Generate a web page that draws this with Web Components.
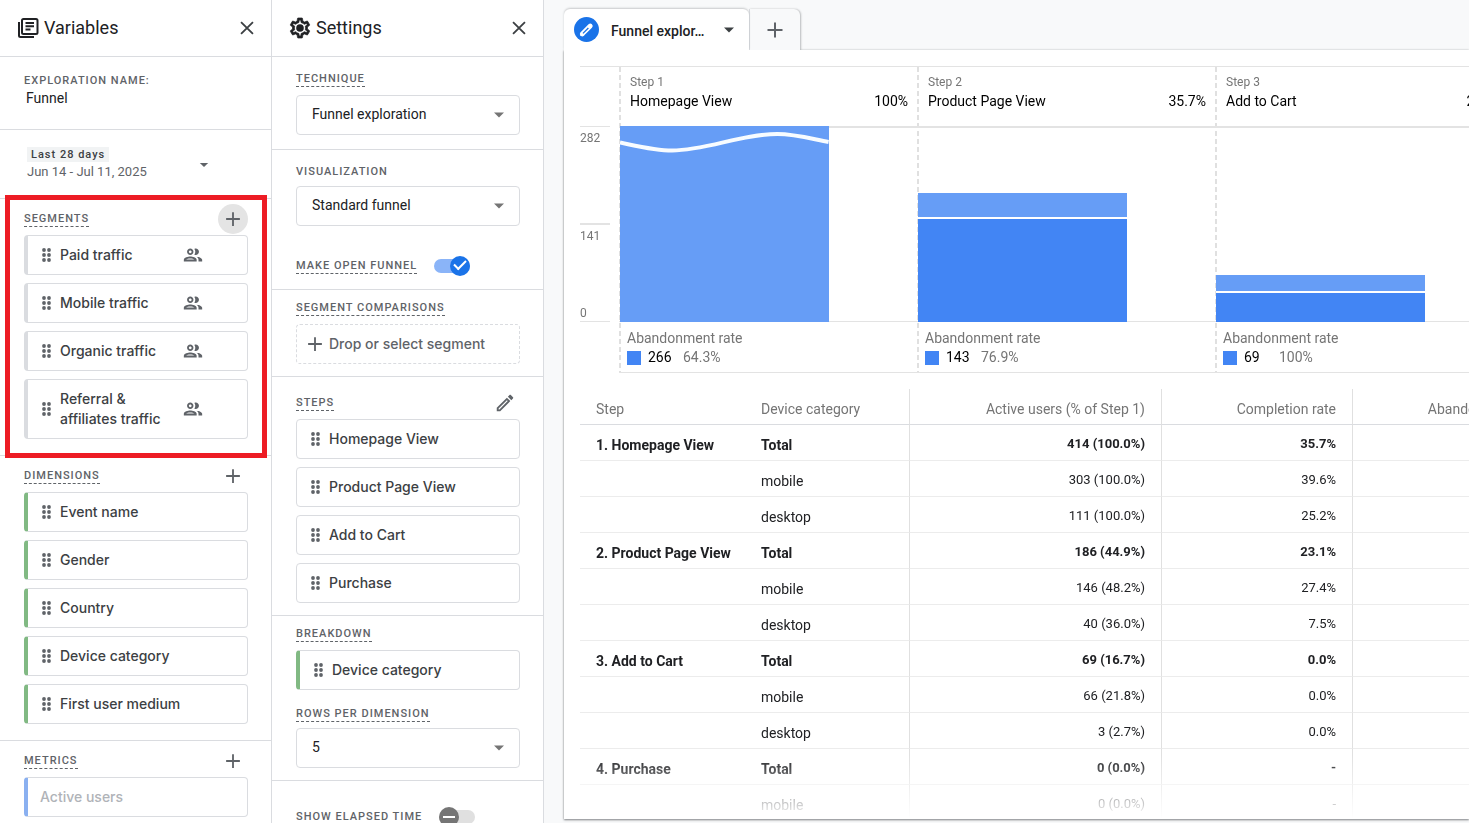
<!DOCTYPE html>
<html lang="en">
<head>
<meta charset="utf-8">
<meta name="viewport" content="width=device-width, initial-scale=1">
<title>Funnel exploration</title>
<style>
  :root {
    --line: #dadce0;
    --ink: #202124;
    --chip-ink: #3c4043;
    --muted: #5f6368;
    --grey: #757575;
    --blue: #1a73e8;
    --green: #81b983;
    --display: "Google Sans", Inter, "Open Sans", sans-serif;
  }
  body { margin: 0; font-family: Roboto, "Liberation Sans", sans-serif; font-size: 14px; color: var(--ink); background: #f8f9fa; }
</style>
</head>
<body>
<exploration-app></exploration-app>

<script>
const define = (name, html, init) => {
  const template = document.createElement('template');
  template.innerHTML = html;
  customElements.define(name, class extends HTMLElement {
    connectedCallback() {
      if (this.shadowRoot) return;
      const content = template.content.cloneNode(true);
      if (init) init(this, content);
      this.attachShadow({ mode: 'open' }).append(content);
    }
  });
};

const ICONS = {
  close: '<path d="M5.5 5.5l13 13M18.5 5.5l-13 13" fill="none" stroke="currentColor" stroke-width="2"/>',
  plus: '<path d="M12 4.500v15M4.500 12h15" fill="none" stroke="currentColor" stroke-width="2"/>',
  arrow: '<path d="M7 9.500h10l-5 5z"/>',
  library: '<path d="M7.500 3h12.500a1.500 1.500 0 0 1 1.500 1.500v12a1.500 1.500 0 0 1-1.500 1.500h-12.500a1.500 1.500 0 0 1-1.500-1.500v-12a1.500 1.500 0 0 1 1.500-1.500zM3 6v13.500a1.500 1.500 0 0 0 1.500 1.500H18M9.500 7h8.500M9.500 10.300h8.500M9.500 13.600h5" fill="none" stroke="currentColor" stroke-width="2"/>',
  people: '<path d="M9 13.750c-2.340 0-7 1.170-7 3.500V19h14v-1.750c0-2.330-4.660-3.500-7-3.500zM4.340 17c.84-.58 2.870-1.250 4.660-1.250s3.820.67 4.660 1.250H4.340zM9 12c1.930 0 3.500-1.570 3.500-3.500S10.930 5 9 5 5.500 6.570 5.500 8.500 7.070 12 9 12zm0-5c.83 0 1.500.67 1.500 1.500S9.830 10 9 10s-1.500-.67-1.500-1.500S8.170 7 9 7zm7.040 6.810c1.160.84 1.960 1.960 1.960 3.440V19h4v-1.750c0-2.020-3.500-3.170-5.960-3.440zM15 12c1.930 0 3.500-1.570 3.500-3.500S16.930 5 15 5c-.54 0-1.040.13-1.500.35.63.89 1 1.980 1 3.150s-.37 2.260-1 3.150c.46.22.96.35 1.500.35z"/>',
  edit: '<path d="M14.060 9.020l.92.92L5.920 19H5v-.92l9.060-9.060M17.660 3c-.25 0-.51.1-.7.29l-1.830 1.830 3.750 3.750 1.830-1.830c.39-.39.39-1.020 0-1.410l-2.340-2.340c-.2-.2-.45-.29-.71-.29zm-3.600 3.190L3 17.250V21h3.750L17.810 9.940l-3.750-3.750z"/>',
  badge: '<circle cx="12" cy="12" r="12" fill="#1a73e8"/><path d="M8 16.200l7.600-7.600" fill="none" stroke="#fff" stroke-width="4.600" stroke-linecap="round"/><path d="M6 18.300l.6-4 3.400 3.400z" fill="#fff"/><path d="M8.600 15.700l5.200-5.200" fill="none" stroke="#1a73e8" stroke-width="1.300"/>',
  gear: '<path d="M19.430 12.980c.04-.32.07-.64.07-.98 0-.34-.03-.66-.07-.98l2.110-1.650c.19-.15.24-.42.12-.64l-2-3.460c-.09-.16-.26-.25-.44-.25-.06 0-.12.01-.17.03l-2.490 1c-.52-.4-1.080-.73-1.690-.98l-.38-2.650C14.460 2.180 14.250 2 14 2h-4c-.25 0-.46.18-.49.42l-.38 2.650c-.61.25-1.170.59-1.690.98l-2.490-1c-.06-.02-.12-.03-.18-.03-.17 0-.34.09-.43.25l-2 3.460c-.13.22-.07.49.12.64l2.110 1.650c-.04.32-.07.65-.07.98 0 .33.03.66.07.98l-2.110 1.650c-.19.15-.24.42-.12.64l2 3.460c.09.16.26.25.44.25.06 0 .12-.01.17-.03l2.490-1c.52.4 1.080.73 1.690.98l.38 2.650c.03.24.24.42.49.42h4c.25 0 .46-.18.49-.42l.38-2.650c.61-.25 1.170-.59 1.690-.98l2.490 1c.06.02.12.03.18.03.17 0 .34-.09.43-.25l2-3.460c.12-.22.07-.49-.12-.64l-2.110-1.650zm-1.980-1.710c.04.31.05.52.05.73 0 .21-.02.43-.05.73l-.14 1.130.89.7 1.080.84-.7 1.210-1.270-.51-1.040-.42-.9.68c-.43.32-.84.56-1.250.73l-1.060.43-.16 1.130-.2 1.350h-1.400l-.19-1.350-.16-1.130-1.060-.43c-.43-.18-.83-.41-1.230-.71l-.91-.7-1.060.43-1.270.51-.7-1.210 1.080-.84.89-.7-.14-1.130c-.03-.31-.05-.54-.05-.74s.02-.43.05-.73l.14-1.130-.89-.7-1.080-.84.7-1.210 1.270.51 1.040.42.9-.68c.43-.32.84-.56 1.250-.73l1.060-.43.16-1.130.2-1.350h1.390l.19 1.350.16 1.130 1.060.43c.43.18.83.41 1.230.71l.91.7 1.060-.43 1.270-.51.7 1.210-1.070.85-.89.7.14 1.130z" stroke="currentColor" stroke-width=".7"/><circle cx="12" cy="12" r="3.800"/>'
};

define('ui-icon', `
<style>
  :host { display: block; flex: none; width: 24px; height: 24px; }
  svg { display: block; width: 100%; height: 100%; fill: currentColor; }
</style>
<svg viewBox="0 0 24 24" aria-hidden="true"></svg>`, (el, root) => {
  root.querySelector('svg').innerHTML = ICONS[el.getAttribute('name')];
});

define('icon-button', `
<style>
  :host { display: block; flex: none; }
  button { display: grid; place-items: center; width: 30px; height: 30px; padding: 0; border: 0; border-radius: 50%; background: none; color: var(--muted); cursor: pointer; }
  :host([active]) button { background: #e4e4e4; }
  :host([dark]) button { color: var(--chip-ink); }
  ui-icon { width: 22px; height: 22px; }
</style>
<button type="button"><ui-icon></ui-icon></button>`, (el, root) => {
  root.querySelector('ui-icon').setAttribute('name', el.getAttribute('icon'));
  root.querySelector('button').setAttribute('aria-label', el.getAttribute('label'));
});

define('side-panel', `
<style>
  :host { display: flex; flex-direction: column; box-sizing: border-box; height: 100%; overflow: hidden; background: #fff; border-right: 1px solid var(--line); }
  header { display: flex; align-items: center; flex: none; height: 56px; padding: 0 9px 0 16px; gap: 4px; border-bottom: 1px solid var(--line); }
  h2 { flex: 1; margin: 0; font: 400 18px/24px Roboto, sans-serif; }
  .body { flex: 1; min-height: 0; overflow-y: auto; scrollbar-width: none; }
</style>
<header><ui-icon></ui-icon><h2></h2><icon-button dark icon="close" label="Close panel"></icon-button></header>
<div class="body"><slot></slot></div>`, (el, root) => {
  root.querySelector('ui-icon').setAttribute('name', el.getAttribute('icon'));
  root.querySelector('h2').textContent = el.getAttribute('heading');
});

define('panel-section', `
<style>
  :host { display: block; padding: 10px 24px 12px; border-bottom: 1px solid var(--line); }
</style>
<slot></slot>`);

define('variable-list', `
<style>
  :host { display: block; position: relative; padding: 5px 23px 16px 24px; border-bottom: 1px solid var(--line); }
  :host([spaced]) { padding-top: 11px; padding-bottom: 12px; }
  :host([highlighted])::after { content: ""; position: absolute; inset: -4px 4px -3px 5px; border: 5px solid #ed1c24; pointer-events: none; }
  header { display: flex; align-items: center; justify-content: space-between; height: 30px; margin-bottom: 1px; }
  h3 { margin: 0; font: 500 11px/15px Roboto, sans-serif; letter-spacing: 1px; text-transform: uppercase; color: var(--muted); border-bottom: 1px dashed var(--muted); }
  .items { display: grid; gap: 8px; }
</style>
<header><h3></h3><icon-button></icon-button></header>
<div class="items"><slot></slot></div>`, (el, root) => {
  const heading = el.getAttribute('heading');
  const icon = el.getAttribute('action') || 'plus';
  const button = root.querySelector('icon-button');
  root.querySelector('h3').textContent = heading;
  button.setAttribute('icon', icon);
  button.setAttribute('label', `${icon === 'edit' ? 'Edit' : 'Add'} ${heading}`);
  button.toggleAttribute('active', el.hasAttribute('highlighted'));
});

define('field-heading', `
<style>
  :host { display: block; }
  h3 { width: fit-content; margin: 0 0 8px; font: 500 11px/15px Roboto, sans-serif; letter-spacing: 1px; text-transform: uppercase; color: var(--muted); border-bottom: 1px dashed var(--muted); }
</style>
<h3><slot></slot></h3>`);

define('item-chip', `
<style>
  :host { display: flex; align-items: center; box-sizing: border-box; min-height: 40px; padding: 0 14px; border: 1px solid var(--line); border-radius: 4px; background: #fff; color: var(--chip-ink); font: 500 14px/20px var(--display); }
  :host([kind]) { border-left-width: 4px; }
  :host([kind="dimension"]) { border-left-color: var(--green); }
  :host([kind="metric"]) { border-left-color: #8ab0f0; }
  :host([placeholder]) { color: #b0b3b8; padding-left: 12px; }
  :host([placeholder]) .drag { display: none; }
  :host([tall]) { min-height: 60px; }
  .drag { width: 18px; height: 20px; color: var(--muted); }
  .text { flex: 1; max-width: 112px; }
  :host(:not([audience])) .text { max-width: none; }
  .people { display: none; width: 22px; height: 22px; margin-left: 10px; color: var(--muted); }
  :host([audience]) .people { display: block; }
  .drag svg { display: block; fill: currentColor; }
</style>
<span class="drag"><svg width="9" height="20" viewBox="0 0 9 20" aria-hidden="true"><circle cx="2" cy="5" r="1.900"/><circle cx="7" cy="5" r="1.900"/><circle cx="2" cy="10" r="1.900"/><circle cx="7" cy="10" r="1.900"/><circle cx="2" cy="15" r="1.900"/><circle cx="7" cy="15" r="1.900"/></svg></span>
<span class="text"><slot></slot></span>
<ui-icon class="people" name="people"></ui-icon>`);

define('text-field', `
<style>
  :host { display: block; padding: 16px 24px 21px; border-bottom: 1px solid var(--line); }
  label { display: block; font: 500 11px/15px Roboto, sans-serif; letter-spacing: 1px; text-transform: uppercase; color: var(--muted); }
  input { display: block; box-sizing: border-box; width: 100%; height: 20px; padding: 0 2px; border: 0; outline: 0; background: none; font: 400 14px/20px Roboto, sans-serif; color: var(--ink); }
</style>
<label for="field"></label><input id="field" type="text">`, (el, root) => {
  root.querySelector('label').textContent = el.getAttribute('label');
  root.querySelector('input').value = el.getAttribute('value');
});

define('date-range', `
<style>
  :host { display: block; padding: 17px 24px 16px 27px; border-bottom: 1px solid var(--line); }
  button { display: flex; align-items: center; justify-content: space-between; width: 100%; padding: 0 9px 0 0; border: 0; background: none; text-align: left; cursor: pointer; color: var(--muted); }
  .preset { display: block; width: fit-content; padding: 0 4px; background: #f1f3f4; font: 500 11px/15px Roboto, sans-serif; letter-spacing: 1px; color: var(--chip-ink); }
  .range { display: block; font: 400 13px/20px Roboto, sans-serif; }
  ui-icon { width: 20px; height: 20px; margin-right: 24px; }
</style>
<button type="button"><span><span class="preset">Last 28 days</span><span class="range">Jun 14 - Jul 11, 2025</span></span><ui-icon name="arrow"></ui-icon></button>`);

define('select-field', `
<style>
  :host { display: block; }
  label { display: block; width: fit-content; margin-bottom: 6px; font: 500 11px/15px Roboto, sans-serif; letter-spacing: 1px; text-transform: uppercase; color: var(--muted); border-bottom: 1px dashed transparent; }
  :host([help]) label { border-bottom-color: var(--muted); }
  :host([roomy]) label { margin-bottom: 8px; }
  .box { display: grid; align-items: center; }
  .box > * { grid-area: 1 / 1; }
  select { appearance: none; box-sizing: border-box; width: 100%; height: 40px; padding: 0 36px 2px 15px; border: 1px solid var(--line); border-radius: 4px; background: #fff; font: 400 14px Roboto, sans-serif; color: var(--ink); }
  ui-icon { justify-self: end; margin-right: 9px; color: var(--grey); pointer-events: none; }
</style>
<label for="field"></label>
<div class="box"><select id="field"><option></option></select><ui-icon name="arrow"></ui-icon></div>`, (el, root) => {
  root.querySelector('label').textContent = el.getAttribute('label');
  root.querySelector('option').textContent = el.getAttribute('value');
});

define('toggle-field', `
<style>
  :host { display: flex; align-items: center; gap: 17px; height: 20px; }
  label { font: 500 11px/15px Roboto, sans-serif; letter-spacing: 1px; text-transform: uppercase; color: var(--muted); border-bottom: 1px dashed var(--muted); }
  input { appearance: none; position: relative; flex: none; width: 36px; height: 14px; margin: 0; border-radius: 7px; background: #e0e0e0; }
  input:checked { background: #8ab4f8; }
  input::before { content: ""; position: absolute; left: 0; top: -3px; width: 20px; height: 20px; border-radius: 50%; background: var(--grey); }
  input:checked::before { left: 16px; background: var(--blue); }
  input::after { content: ""; position: absolute; left: 4px; top: 6px; width: 12px; height: 2px; background: #fff; }
  input:checked::after { left: 20px; top: 1px; width: 10px; height: 5px; border: solid #fff; border-width: 0 0 2px 2px; background: none; transform: rotate(-45deg); }
</style>
<label for="field"></label><input id="field" type="checkbox" role="switch">`, (el, root) => {
  root.querySelector('label').textContent = el.getAttribute('label');
  root.querySelector('input').checked = el.hasAttribute('on');
});

define('drop-zone', `
<style>
  :host { display: block; }
  button { display: flex; align-items: center; gap: 3px; box-sizing: border-box; width: 100%; height: 40px; padding: 0 7px; border: 1px dashed var(--line); border-radius: 4px; background: #fff; color: var(--muted); font: 500 14px/20px var(--display); text-align: left; cursor: pointer; }
  ui-icon { width: 22px; height: 22px; }
</style>
<button type="button"><ui-icon name="plus"></ui-icon><slot></slot></button>`);

define('variables-panel', `
<style>:host { display: block; min-height: 0; }</style>
<side-panel icon="library" heading="Variables">
  <text-field label="Exploration name:" value="Funnel"></text-field>
  <date-range></date-range>
  <variable-list heading="Segments" highlighted>
    <item-chip kind="segment" audience>Paid traffic</item-chip>
    <item-chip kind="segment" audience>Mobile traffic</item-chip>
    <item-chip kind="segment" audience>Organic traffic</item-chip>
    <item-chip kind="segment" audience tall>Referral &amp;<br>affiliates traffic</item-chip>
  </variable-list>
  <variable-list heading="Dimensions">
    <item-chip kind="dimension">Event name</item-chip>
    <item-chip kind="dimension">Gender</item-chip>
    <item-chip kind="dimension">Country</item-chip>
    <item-chip kind="dimension">Device category</item-chip>
    <item-chip kind="dimension">First user medium</item-chip>
  </variable-list>
  <variable-list heading="Metrics">
    <item-chip kind="metric" placeholder>Active users</item-chip>
  </variable-list>
</side-panel>`);

define('settings-panel', `
<style>
  :host { display: block; min-height: 0; }
  panel-section { padding-right: 23px; }
  .technique { padding-top: 14px; padding-bottom: 14px; }
  .visual { display: grid; gap: 30px; padding-top: 14px; padding-bottom: 13px; }
  .breakdown select-field { margin-top: 16px; }
  .elapsed { padding-top: 26px; }
</style>
<side-panel icon="gear" heading="Settings">
  <panel-section class="technique"><select-field help roomy label="Technique" value="Funnel exploration"></select-field></panel-section>
  <panel-section class="visual"><select-field label="Visualization" value="Standard funnel"></select-field><toggle-field on label="Make open funnel"></toggle-field></panel-section>
  <panel-section><field-heading>Segment comparisons</field-heading><drop-zone>Drop or select segment</drop-zone></panel-section>
  <variable-list spaced heading="Steps" action="edit">
    <item-chip>Homepage View</item-chip>
    <item-chip>Product Page View</item-chip>
    <item-chip>Add to Cart</item-chip>
    <item-chip>Purchase</item-chip>
  </variable-list>
  <panel-section class="breakdown"><field-heading>Breakdown</field-heading><item-chip kind="dimension">Device category</item-chip><select-field help label="Rows per dimension" value="5"></select-field></panel-section>
  <panel-section class="elapsed"><toggle-field label="Show elapsed time"></toggle-field></panel-section>
</side-panel>`);

define('report-tabs', `
<style>
  :host { display: flex; height: 41px; padding-top: 9px; position: relative; z-index: 1; }
  button { display: flex; align-items: center; box-sizing: border-box; border: 0; padding: 0; font: 500 14px/20px Roboto, sans-serif; color: var(--ink); text-align: left; cursor: pointer; }
  .tab { width: 185px; padding: 0 8px 0 10px; background: #fff; border-radius: 6px 6px 0 0; box-shadow: 0 -1px 2px #3c404340; clip-path: inset(-3px -3px 0 -3px); position: relative; z-index: 1; }
  .tab span { margin-left: 12px; flex: 1; padding-top: 2px; }
  .badge { width: 25px; height: 25px; }
  .add { justify-content: center; width: 51px; background: #f8f9fa; border-left: 1px solid var(--line); border-radius: 0 6px 0 0; color: var(--muted); box-shadow: 1px 0 2px #3c404355; clip-path: inset(-3px -3px 0 0); }
  .arrow { color: var(--chip-ink); }
</style>
<button type="button" class="tab"><ui-icon class="badge" name="badge"></ui-icon><span>Funnel explor…</span><ui-icon class="arrow" name="arrow"></ui-icon></button>
<button type="button" class="add" aria-label="Add tab"><ui-icon name="plus"></ui-icon></button>`);

define('funnel-step', `
<style>
  :host { display: block; flex: none; width: 298px; background: repeating-linear-gradient(#e0e0e0 0 5px, transparent 5px 8px) 0 0 / 2px 100% no-repeat; }
  .head { display: grid; grid-template-columns: 1fr auto; align-content: start; box-sizing: border-box; height: 59px; padding: 7px 9px 0 11px; color: #000; line-height: 20px; }
  .head small { grid-column: 1 / -1; font-size: 12px; line-height: 17px; color: var(--grey); }
  .plot { display: flex; align-items: flex-end; height: 196px; background: linear-gradient(#e3e3e3, #e3e3e3) 0 0 / 100% 2px no-repeat, linear-gradient(#e3e3e3, #e3e3e3) 0 100% / 100% 1px no-repeat; }
  .bar { box-sizing: border-box; width: 70%; margin-left: 1px; height: var(--total); background: #669df6; display: flex; flex-direction: column; justify-content: flex-end; }
  .done { height: var(--kept); background: #4285f4; border-top: 2px solid #fff; }
  svg { display: none; width: 100%; height: 100%; }
  :host([wave]) svg { display: block; }
  :host([wave]) .done { display: none; }
  .foot { padding: 6px 8px 5px; color: var(--grey); border-bottom: 1px solid #e3e3e3; line-height: 20px; }
  .foot p { margin: 0; }
  .key { display: grid; grid-template-columns: 14px 28px auto; column-gap: 7px; align-items: center; line-height: 19px; }
  .key i { width: 14px; height: 14px; background: #4285f4; }
  .key b { font-weight: 400; color: #000; }
</style>
<div class="head"><small></small><span class="name"></span><span class="rate"></span></div>
<div class="plot"><div class="bar"><svg viewBox="0 0 208 196" preserveAspectRatio="none" aria-hidden="true"><path d="M0 16.500C17 20 35 24.500 52 24.500C86 24.500 121 8 157 8C174 8 190 12.500 208 16" fill="none" stroke="#f8fcff" stroke-width="4"/></svg><div class="done"></div></div></div>
<div class="foot"><p>Abandonment rate</p><div class="key"><i></i><b></b><span></span></div></div>`, (el, root) => {
  const put = (selector, attr) => { root.querySelector(selector).textContent = el.getAttribute(attr); };
  put('small', 'step'); put('.name', 'name'); put('.rate', 'rate'); put('.key b', 'lost'); put('.key span', 'share');
});

define('funnel-chart', `
<style>
  :host { display: flex; margin-left: 16px; border-top: 1px solid #e3e3e3; overflow: hidden; }
  .axis { display: flex; flex-direction: column; flex: none; box-sizing: border-box; width: 30px; height: 196px; margin: 59px 9px 0 0; font-size: 12px; line-height: 16px; color: var(--grey); border: solid #e3e3e3; border-width: 1px 0; }
  .axis span { box-sizing: border-box; padding-top: 3px; }
  .axis .top { height: 96px; }
  .axis .mid { flex: 1; border-top: 2px solid #e3e3e3; }
  .axis .zero { padding: 0; }
</style>
<div class="axis"><span class="top">282</span><span class="mid">141</span><span class="zero">0</span></div>
<funnel-step wave style="--total:100%;--kept:0%" step="Step 1" name="Homepage View" rate="100%" lost="266" share="64.3%"></funnel-step>
<funnel-step style="--total:66%;--kept:80%" step="Step 2" name="Product Page View" rate="35.7%" lost="143" share="76.9%"></funnel-step>
<funnel-step style="--total:24%;--kept:62%" step="Step 3" name="Add to Cart" rate="23.1%" lost="69" share="100%"></funnel-step>`);

define('funnel-table', `
<style>
  :host { display: block; margin: 16px 0 0 16px; }
  table { width: 960px; table-layout: fixed; border-collapse: separate; border-spacing: 0; }
  th, td { box-sizing: border-box; height: 36px; padding: 4px 16px 0; border-bottom: 1px solid #ececec; text-align: left; vertical-align: middle; font-weight: 400; line-height: 16px; }
  thead th { color: var(--grey); border-bottom-color: var(--line); }
  th:nth-child(n+2), td:nth-child(n+2) { border-right: 1px solid #e0e0e0; }
  thead .num, .num { text-align: right; }
  td.num { font-size: 13px; padding-top: 2px; }
  .total > * { font-weight: 700; }
  tbody th { white-space: nowrap; }
</style>
<table>
  <colgroup><col style="width:165px"><col style="width:165px"><col style="width:252px"><col style="width:191px"><col style="width:187px"></colgroup>
  <thead><tr><th scope="col">Step</th><th scope="col">Device category</th><th scope="col" class="num">Active users (% of Step 1)</th><th scope="col" class="num">Completion rate</th><th scope="col" class="num">Abandonments</th></tr></thead>
  <tbody></tbody>
</table>`, (el, root) => {
  const rows = [
    ['1. Homepage View', 'Total', '414 (100.0%)', '35.7%'],
    ['', 'mobile', '303 (100.0%)', '39.6%'],
    ['', 'desktop', '111 (100.0%)', '25.2%'],
    ['2. Product Page View', 'Total', '186 (44.9%)', '23.1%'],
    ['', 'mobile', '146 (48.2%)', '27.4%'],
    ['', 'desktop', '40 (36.0%)', '7.5%'],
    ['3. Add to Cart', 'Total', '69 (16.7%)', '0.0%'],
    ['', 'mobile', '66 (21.8%)', '0.0%'],
    ['', 'desktop', '3 (2.7%)', '0.0%'],
    ['4. Purchase', 'Total', '0 (0.0%)', '-'],
    ['', 'mobile', '0 (0.0%)', '-']
  ];
  root.querySelector('tbody').innerHTML = rows.map(([step, device, users, rate]) =>
    `<tr class="${step ? 'total' : ''}"><th scope="row">${step}</th><td>${device}</td><td class="num">${users}</td><td class="num">${rate}</td><td class="num"></td></tr>`).join('');
});

define('exploration-app', `
<style>
  :host { display: grid; grid-template-columns: 272px 272px minmax(0, 1fr); height: 100vh; overflow: hidden; }
  main { display: flex; flex-direction: column; min-height: 0; padding: 0 0 4px 20px; overflow: hidden; }
  .report { flex: 1; min-height: 0; display: flex; background: #fff; box-shadow: 0 1px 2px #3c404399, 0 0 2px #3c404333; }
  .scroll { flex: 1; min-width: 0; padding-top: 16px; overflow: hidden; mask-image: linear-gradient(#000 calc(100% - 64px), transparent); }
</style>
<variables-panel></variables-panel>
<settings-panel></settings-panel>
<main>
  <report-tabs></report-tabs>
  <section class="report"><div class="scroll"><funnel-chart></funnel-chart><funnel-table></funnel-table></div></section>
</main>`);
</script>
</body>
</html>
